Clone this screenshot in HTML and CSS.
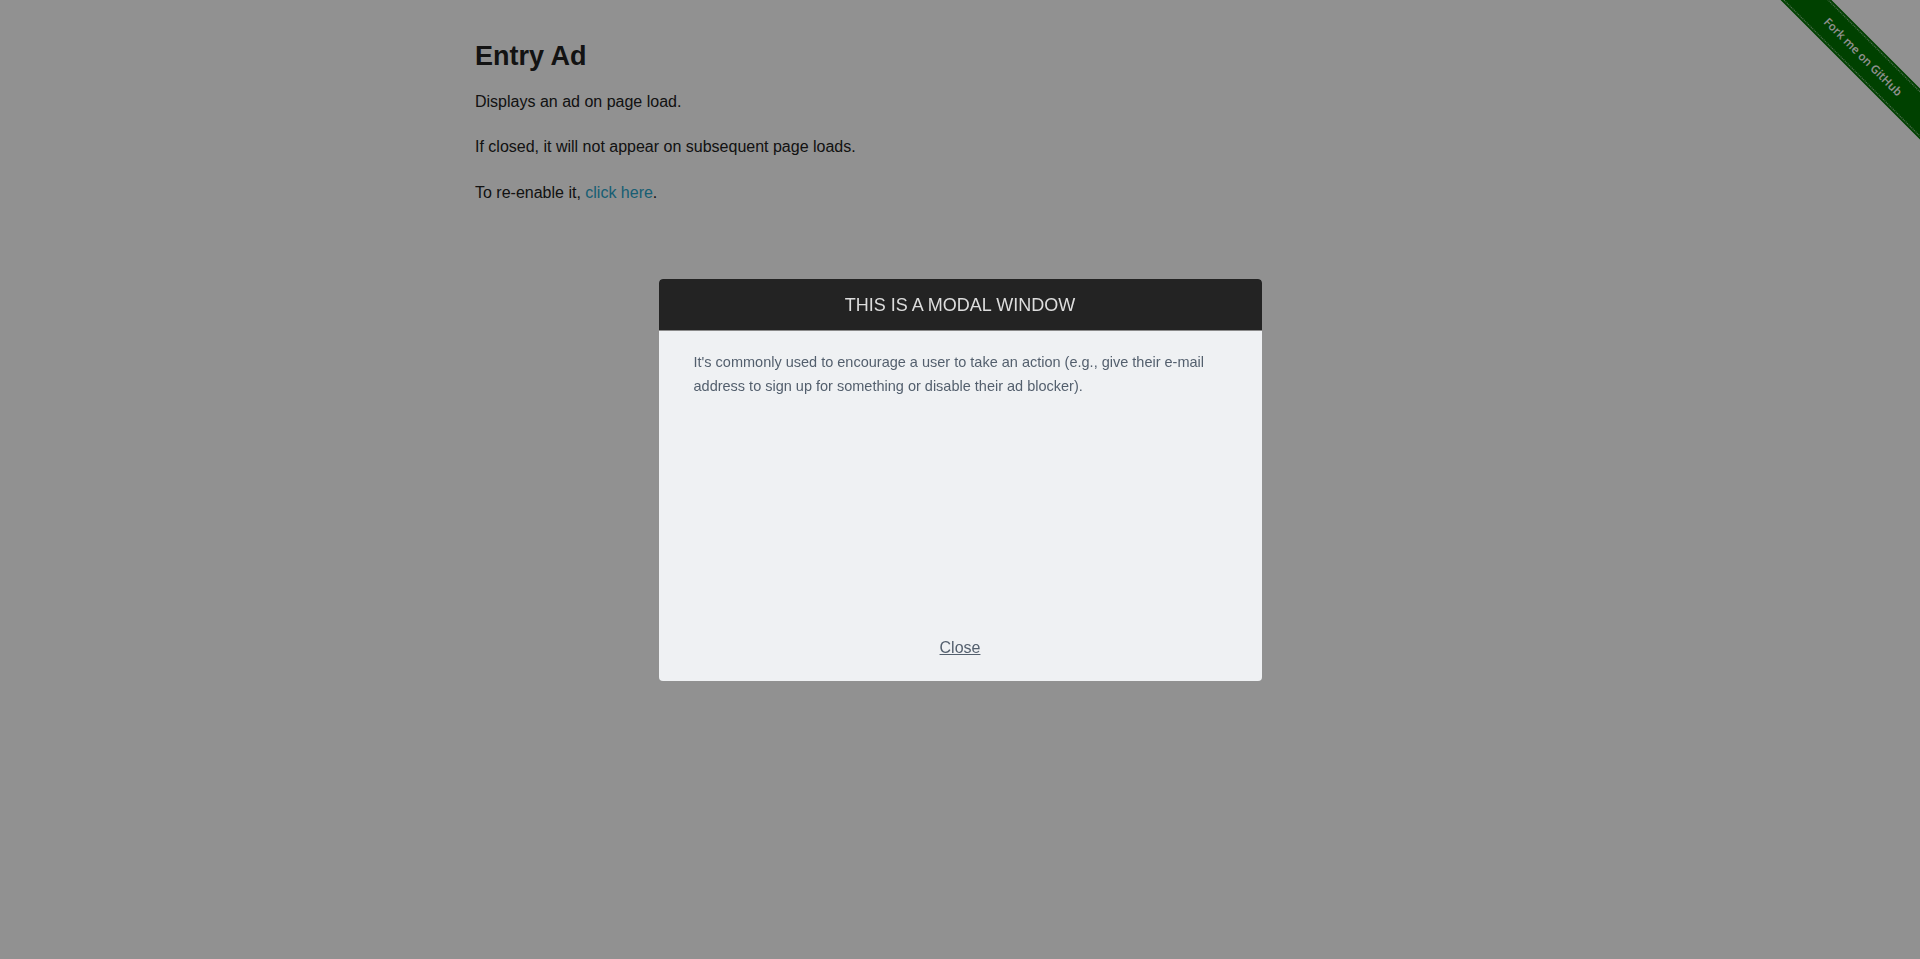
FILE: index.html
```html
<!DOCTYPE html>
<html lang="en">
<head>
<meta charset="utf-8">
<title>The Internet</title>
<link rel="stylesheet" href="styles.css">
</head>
<body>
  <a class="ribbon" href="#"><span class="ribbon-band">Fork me on GitHub</span></a>
  <div class="row">
    <div class="content">
      <h3 class="title">Entry Ad</h3>
      <p class="text">Displays an ad on page load.</p>
      <p class="text">If closed, it will not appear on subsequent page loads.</p>
      <p class="text">To re-enable it, <a class="link" href="#">click here</a>.</p>
    </div>
  </div>
  <div class="overlay">
    <div class="modal">
      <div class="modal-title">THIS IS A MODAL WINDOW</div>
      <div class="modal-body">
        <p class="modal-text">It's commonly used to encourage a user to take an action (e.g., give their e-mail address to sign up for something or disable their ad blocker).</p>
        <div class="modal-footer"><a class="close-link" href="#">Close</a></div>
      </div>
    </div>
  </div>
</body>
</html>
```

FILE: styles.css
```css
html, body {
  margin: 0;
  padding: 0;
  height: 100%;
}
body {
  background: #ffffff;
  color: #222222;
  font-family: "Liberation Sans", Arial, sans-serif;
  font-size: 16px;
}
.row {
  max-width: 1000px;
  margin: 0 auto;
}
.content {
  padding: 35px 15px 0;
}
.title {
  font-size: 27px;
  font-weight: bold;
  line-height: 1.4;
  margin: 3px 0 13px;
  color: #222222;
}
.text {
  font-size: 16px;
  line-height: 1.6;
  margin: 0 0 20px;
}
.link {
  color: #2ba6cb;
  text-decoration: none;
}
.ribbon {
  position: absolute;
  top: 0;
  right: 0;
  width: 149px;
  height: 149px;
  overflow: hidden;
  text-decoration: none;
}
.ribbon-band {
  position: absolute;
  left: -13px;
  top: 41px;
  width: 210px;
  height: 32px;
  box-sizing: border-box;
  background: #007200;
  color: #ffffff;
  font-family: "Open Sans", "DejaVu Sans", sans-serif;
  font-weight: 600;
  font-size: 11.5px;
  line-height: 26px;
  text-align: center;
  transform: rotate(45deg);
  border-top: 1px dotted rgba(255,255,255,0.6);
  border-bottom: 1px dotted rgba(255,255,255,0.6);
  outline: 2px solid #007200;
  padding-top: 2px;
}
.overlay {
  position: fixed;
  inset: 0;
  background: rgba(0, 0, 0, 0.43);
  display: flex;
  align-items: center;
  justify-content: center;
}
.modal {
  width: 603px;
  height: 402px;
  display: flex;
  flex-direction: column;
  border-radius: 4px;
  overflow: hidden;
  background: #eff1f3;
}
.modal-title {
  height: 52px;
  flex: none;
  background: #232323;
  border-bottom: 1px solid #8a8a8a;
  color: #dddddd;
  font-size: 18px;
  padding-top: 2px;
  box-sizing: border-box;
  display: flex;
  align-items: center;
  justify-content: center;
}
.modal-body {
  flex: 1;
  display: flex;
  flex-direction: column;
  padding: 19px 35px 21px 35px;
}
.modal-text {
  margin: 0 -5px 0 0;
  font-size: 14.5px;
  line-height: 24.5px;
  color: #535f6d;
}
.modal-footer {
  margin-top: auto;
  text-align: center;
  line-height: 24px;
}
.close-link {
  font-size: 16px;
  color: #535f6d;
  text-decoration: underline;
}
```
